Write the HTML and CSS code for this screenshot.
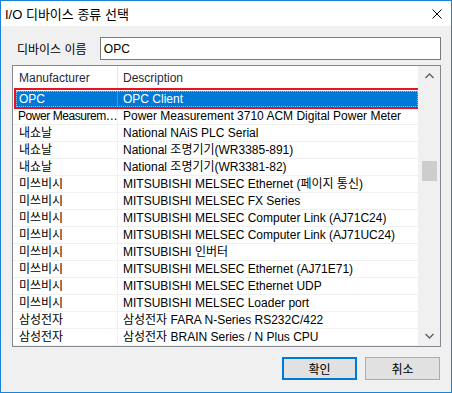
FILE: index.html
```html
<!DOCTYPE html>
<html lang="ko">
<head>
    <meta charset="UTF-8">
    <title>I/O 디바이스 종류 선택</title>
    <link rel="stylesheet" href="styles.css">
</head>
<body>
    <div class="window">
        <div class="titlebar">
            <span class="title">I/O 디바이스 종류 선택</span>
            <svg class="close" width="10" height="10" viewBox="0 0 10 10">
                <path d="M0.5 0.5 L9.5 9.5 M9.5 0.5 L0.5 9.5" stroke="#000" stroke-width="1" fill="none"/>
            </svg>
        </div>

        <div class="content">
            <div class="name-row">
                <label for="devname">디바이스 이름</label>
                <input type="text" id="devname" value="OPC">
            </div>

            <div class="list">
                <div class="rows">
                    <div class="row head">
                        <div class="c1">Manufacturer</div>
                        <div class="c2">Description</div>
                    </div>
                    <div class="row sel">
                        <div class="c1">OPC</div>
                        <div class="c2">OPC Client</div>
                    </div>
                    <div class="row">
                        <div class="c1 tight">Power Measurem…</div>
                        <div class="c2">Power Measurement 3710 ACM Digital Power Meter</div>
                    </div>
                    <div class="row">
                        <div class="c1">내쇼날</div>
                        <div class="c2">National NAiS PLC Serial</div>
                    </div>
                    <div class="row">
                        <div class="c1">내쇼날</div>
                        <div class="c2">National 조명기기(WR3385-891)</div>
                    </div>
                    <div class="row">
                        <div class="c1">내쇼날</div>
                        <div class="c2">National 조명기기(WR3381-82)</div>
                    </div>
                    <div class="row">
                        <div class="c1">미쓰비시</div>
                        <div class="c2">MITSUBISHI MELSEC Ethernet (페이지 통신)</div>
                    </div>
                    <div class="row">
                        <div class="c1">미쓰비시</div>
                        <div class="c2">MITSUBISHI MELSEC FX Series</div>
                    </div>
                    <div class="row">
                        <div class="c1">미쓰비시</div>
                        <div class="c2">MITSUBISHI MELSEC Computer Link (AJ71C24)</div>
                    </div>
                    <div class="row">
                        <div class="c1">미쓰비시</div>
                        <div class="c2">MITSUBISHI MELSEC Computer Link (AJ71UC24)</div>
                    </div>
                    <div class="row">
                        <div class="c1">미쓰비시</div>
                        <div class="c2">MITSUBISHI 인버터</div>
                    </div>
                    <div class="row">
                        <div class="c1">미쓰비시</div>
                        <div class="c2">MITSUBISHI MELSEC Ethernet (AJ71E71)</div>
                    </div>
                    <div class="row">
                        <div class="c1">미쓰비시</div>
                        <div class="c2">MITSUBISHI MELSEC Ethernet UDP</div>
                    </div>
                    <div class="row">
                        <div class="c1">미쓰비시</div>
                        <div class="c2">MITSUBISHI MELSEC Loader port</div>
                    </div>
                    <div class="row">
                        <div class="c1">삼성전자</div>
                        <div class="c2">삼성전자 FARA N-Series RS232C/422</div>
                    </div>
                    <div class="row">
                        <div class="c1">삼성전자</div>
                        <div class="c2">삼성전자 BRAIN Series / N Plus CPU</div>
                    </div>
                </div>
                <div class="scrollbar">
                    <svg class="arrow" width="9" height="6" viewBox="0 0 9 6">
                        <path d="M0.5 5 L4.5 1 L8.5 5" stroke="#606060" stroke-width="1.4" fill="none"/>
                    </svg>
                    <div class="track">
                        <div class="thumb"></div>
                    </div>
                    <svg class="arrow" width="9" height="6" viewBox="0 0 9 6">
                        <path d="M0.5 1 L4.5 5 L8.5 1" stroke="#606060" stroke-width="1.4" fill="none"/>
                    </svg>
                </div>
            </div>

            <div class="buttons">
                <button class="btn default">확인</button>
                <button class="btn">취소</button>
            </div>
        </div>
    </div>
</body>
</html>
```

FILE: styles.css
```css
body {
    margin: 0;
    font-family: "Liberation Sans", "Noto Sans CJK KR", sans-serif;
    font-size: 12px;
    color: #000;
    background: #fff;
}
.window {
    width: 452px;
    height: 393px;
    box-sizing: border-box;
    border: 1px solid #1883d7;
    background: #f0f0f0;
    display: flex;
    flex-direction: column;
}
.titlebar {
    height: 25px;
    background: #fff;
    display: flex;
    align-items: center;
    justify-content: space-between;
    padding: 0 9px 0 4px;
}
.titlebar .title {
    font-size: 13px;
}
.content {
    padding: 11px 10px 0 11px;
}
.name-row {
    display: flex;
    align-items: center;
    height: 23px;
}
.name-row label {
    width: 83px;
    padding-left: 5px;
}
.name-row input {
    width: 342px;
    height: 23px;
    box-sizing: border-box;
    border: 1px solid #7a7a7a;
    padding: 0 3px;
    font: inherit;
    background: #fff;
    outline: none;
}
.list {
    margin-top: 5px;
    height: 282px;
    box-sizing: border-box;
    border: 1px solid #828790;
    background: #fff;
    display: flex;
}
.rows {
    width: 407px;
    overflow: hidden;
}
.row {
    display: flex;
    height: 17px;
    box-sizing: border-box;
    border-bottom: 1px solid #f0f0f0;
    line-height: 16px;
}
.row .c1 {
    width: 105px;
    padding-left: 6px;
    box-sizing: border-box;
    border-right: 1px solid #f0f0f0;
    white-space: nowrap;
    overflow: hidden;
}
.row .c1.tight {
    padding-left: 5px;
    letter-spacing: -0.45px;
}
.row .c2 {
    flex: 1;
    padding-left: 5px;
    white-space: nowrap;
    overflow: hidden;
}
.row.head {
    height: 25px;
    line-height: 24px;
    border-bottom: none;
    color: #1e2a3a;
}
.row.head .c1 {
    border-right-color: #e5e5e5;
}
.row.sel {
    position: relative;
    margin-left: 3px;
    background: #0078d7;
    color: #fff;
}
.row.sel .c1 {
    width: 102px;
    padding-left: 3px;
    border-right-color: #3d98e1;
}
.row.sel::before {
    content: "";
    position: absolute;
    inset: 0;
    border: 1px dotted #8cc2ee;
}
.row.sel::after {
    content: "";
    position: absolute;
    top: -3px;
    bottom: -2px;
    left: -2px;
    right: -2px;
    border: 2px solid #e81123;
}
.scrollbar {
    width: 21px;
    background: #f0f0f0;
    display: flex;
    flex-direction: column;
    align-items: center;
    border-left: 1px solid #f0f0f0;
}
.scrollbar .arrow {
    margin: 7px 0;
}
.scrollbar .track {
    flex: 1;
    align-self: stretch;
    padding: 0 3px;
}
.scrollbar .thumb {
    margin-top: 75px;
    height: 20px;
    background: #cdcdcd;
}
.buttons {
    display: flex;
    justify-content: flex-end;
    gap: 8px;
    margin-top: 10px;
    padding-right: 1px;
}
.btn {
    width: 75px;
    height: 23px;
    box-sizing: border-box;
    border: 1px solid #adadad;
    background: #e1e1e1;
    font: inherit;
    color: #000;
    padding: 0;
}
.btn.default {
    border: 2px solid #0078d7;
}
```
